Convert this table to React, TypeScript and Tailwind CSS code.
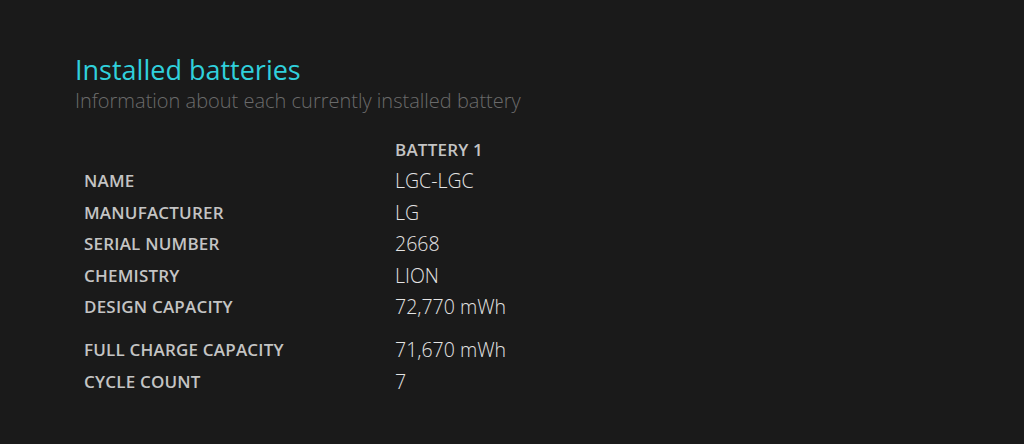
const rows: { label: string; value: string; gap?: boolean }[] = [
  { label: "NAME", value: "LGC-LGC" },
  { label: "MANUFACTURER", value: "LG" },
  { label: "SERIAL NUMBER", value: "2668" },
  { label: "CHEMISTRY", value: "LION" },
  { label: "DESIGN CAPACITY", value: "72,770 mWh" },
  { label: "FULL CHARGE CAPACITY", value: "71,670 mWh", gap: true },
  { label: "CYCLE COUNT", value: "7" },
];

export default function App() {
  return (
    <div
      className="h-[444px] w-[1024px] overflow-hidden bg-[#1a1a1a] pl-[75px] pt-[54px]"
      style={{ fontFamily: '"Open Sans", "Noto Sans", sans-serif' }}
    >
      <h1 className="text-[27px] font-medium leading-[32px] text-[#30d0dc]">Installed batteries</h1>
      <p className="text-[20px] font-light leading-[30px] text-[#6b6b6b]">
        Information about each currently installed battery
      </p>

      <div className="mt-[19px] pl-[9px]">
        <div className="flex h-[30px] items-center">
          <div className="w-[311px]" />
          <div className="text-[17px] font-semibold tracking-[0.2px] text-[#c4c4c4]">BATTERY 1</div>
        </div>
        {rows.map((r) => (
          <div
            key={r.label}
            className={`flex h-[31.5px] items-center ${r.gap ? "mt-[11.5px]" : ""}`}
          >
            <div className="w-[311px] text-[17px] font-semibold tracking-[0.2px] text-[#c4c4c4]">
              {r.label}
            </div>
            <div className="text-[19.5px] font-[350] text-[#e4e4e4]">{r.value}</div>
          </div>
        ))}
      </div>
    </div>
  );
}
